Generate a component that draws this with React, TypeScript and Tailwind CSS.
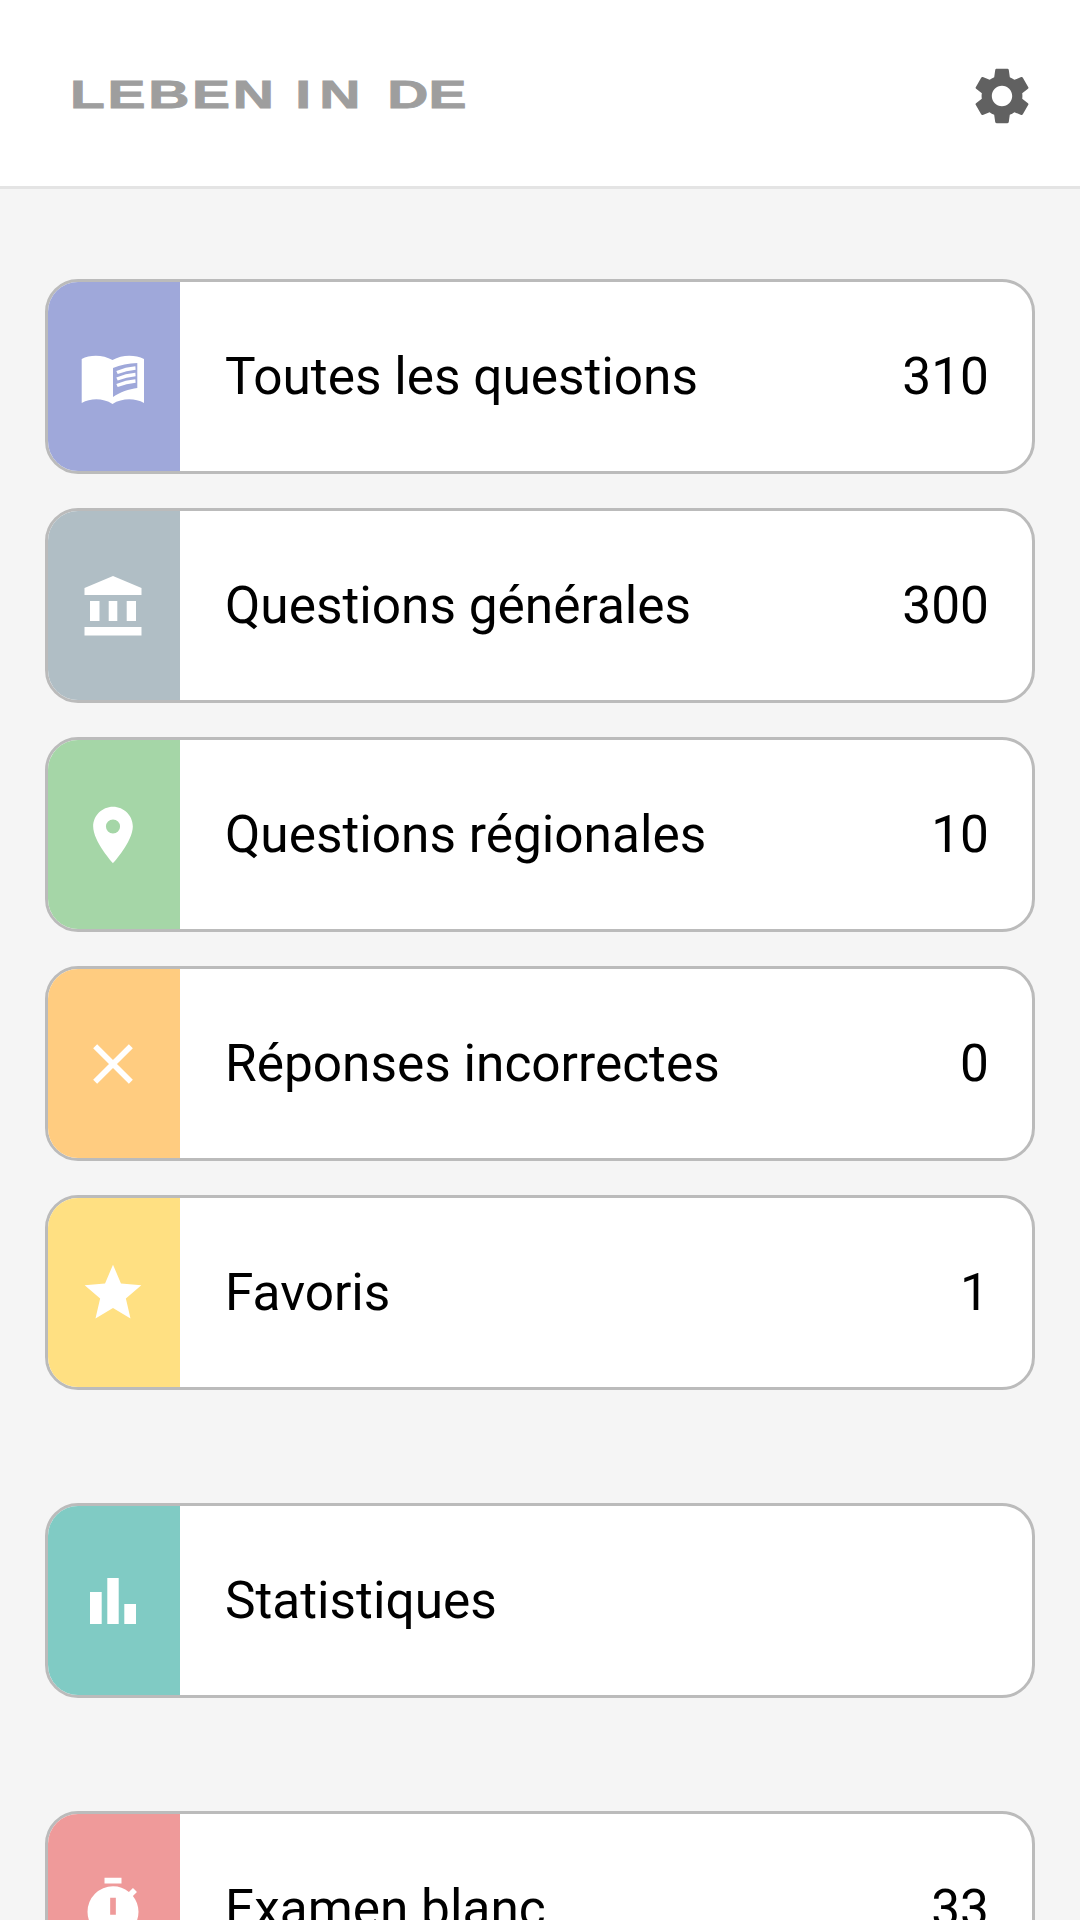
import type { ReactNode } from 'react';

function Gear() {
  return (
    <svg width="68" height="68" viewBox="0 0 24 24" fill="#616161">
      <path d="M19.14 12.94c.04-.3.06-.61.06-.94 0-.32-.02-.64-.07-.94l2.03-1.58a.49.49 0 0 0 .12-.61l-1.92-3.32a.488.488 0 0 0-.59-.22l-2.39.96c-.5-.38-1.03-.7-1.62-.94l-.36-2.54a.484.484 0 0 0-.48-.41h-3.84c-.24 0-.43.17-.47.41l-.36 2.54c-.59.24-1.13.57-1.62.94l-2.39-.96c-.22-.08-.47 0-.59.22L2.74 8.87c-.12.21-.08.47.12.61l2.03 1.58c-.05.3-.09.63-.09.94s.02.64.07.94l-2.03 1.58a.49.49 0 0 0-.12.61l1.92 3.32c.12.22.37.29.59.22l2.39-.96c.5.38 1.03.7 1.62.94l.36 2.54c.05.24.24.41.48.41h3.84c.24 0 .44-.17.47-.41l.36-2.54c.59-.24 1.13-.56 1.62-.94l2.39.96c.22.08.47 0 .59-.22l1.92-3.32c.12-.22.07-.47-.12-.61l-2.01-1.58zM12 15.6c-1.98 0-3.6-1.62-3.6-3.6s1.62-3.6 3.6-3.6 3.6 1.62 3.6 3.6-1.62 3.6-3.6 3.6z" />
    </svg>
  );
}

function BookIcon() {
  return (
    <svg width="80" height="65" viewBox="0 0 80 65" className="ml-[4px] mt-[2px]">
      {/* both pages as one shape, the right page's inner area cut out */}
      <path
        fill="#fff"
        fillRule="evenodd"
        d="M6.7 14C15 9.5 28 9.5 37.5 15 47 9.5 60 9.5 69 14v44c-9-5-22-5-31.5 1C28 53 16 53 6.7 58zM38 23v29c7-5 16-8 24.3-9V18c-9 .5-17 2-24.3 5z"
      />
      <g stroke="#fff" strokeWidth="3.5" fill="none">
        <path d="M42 27.5c6-2.5 12-4 18.5-4.5" />
        <path d="M42 34c6-2.500 12-4 18.5-4.5" />
        <path d="M42 40.5c6-2.500 12-4 18.5-4.5" />
      </g>
    </svg>
  );
}

function BankIcon() {
  return (
    <svg width="58" height="60" viewBox="0 0 58 60" fill="#fff">
      <path d="M29 0 57.5 12v7H.5v-7z" />
      <path d="M6 25h9.5v20H6zM24.7 25h8.6v20h-8.6zM42.7 25H52v20h-9.3zM.5 51h57v8.5H.5z" />
    </svg>
  );
}

function PinIcon() {
  return (
    <svg width="68" height="68" viewBox="0 0 24 24" fill="#fff">
      <path d="M12 2C8.13 2 5 5.13 5 9c0 5.25 7 13 7 13s7-7.75 7-13c0-3.87-3.13-7-7-7zm0 9.5a2.5 2.5 0 0 1 0-5 2.5 2.5 0 0 1 0 5z" />
    </svg>
  );
}

function CloseIcon() {
  return (
    <svg width="68" height="68" viewBox="0 0 24 24" fill="#fff">
      <path d="M19 6.41 17.59 5 12 10.59 6.41 5 5 6.41 10.59 12 5 17.59 6.41 19 12 13.41 17.59 19 19 17.59 13.41 12z" />
    </svg>
  );
}

function StarIcon() {
  return (
    <svg width="68" height="68" viewBox="0 0 24 24" fill="#fff">
      <path d="M12 17.27 18.18 21l-1.64-7.03L22 9.24l-7.19-.61L12 2 9.19 8.63 2 9.24l5.46 4.73L5.82 21z" />
    </svg>
  );
}

function BarsIcon() {
  return (
    <svg width="46" height="46" viewBox="0 0 46 46" fill="#fff">
      <path d="M0 14h11.7v32H0zM17.3 0h11.4v46H17.3zM34.3 26H46v20H34.3z" />
    </svg>
  );
}

function TimerIcon() {
  return (
    <svg width="68" height="68" viewBox="0 0 24 24" fill="#fff">
      <path
        fillRule="evenodd"
        d="M9 1h6v2H9zM19.03 7.39l1.42-1.42c-.43-.51-.9-.99-1.41-1.41l-1.42 1.42A8.96 8.96 0 0 0 12 4a9 9 0 1 0 9 9c0-2.12-.74-4.07-1.97-5.61zM13 14h-2V8h2v6z"
      />
    </svg>
  );
}

function MenuCard({
  icon,
  panel,
  label,
  count,
}: {
  icon: ReactNode;
  panel: string;
  label: string;
  count?: number;
}) {
  return (
    <div className="flex h-[195px] shrink-0 overflow-hidden rounded-[33px] border-[3px] border-[#bbbbbb] bg-white">
      <div className={`flex w-[132px] shrink-0 items-center justify-center pr-[2px] ${panel}`}>
        {icon}
      </div>
      <div className="flex flex-1 items-center justify-between pl-[45px] pr-[43px] text-[51.4px] text-black">
        <span>{label}</span>
        {count !== undefined && <span>{count}</span>}
      </div>
    </div>
  );
}

export default function App() {
  return (
    <div className="flex h-[1920px] w-[1080px] flex-col overflow-hidden bg-[#f5f5f5] font-['Roboto',sans-serif]">
      <header className="flex h-[189px] shrink-0 items-center justify-between border-b-[3px] border-[#e4e4e4] bg-white pl-[70px] pr-[44px] pt-[5px]">
        <div className="origin-left scale-x-[1.5] whitespace-nowrap font-['Liberation_Sans',sans-serif] text-[38px] font-bold tracking-[1.8px] text-[#9e9e9e] [-webkit-text-stroke:0.8px_#9e9e9e]">
          LEBEN <span className="tracking-[5.5px]">IN</span> <span className="tracking-[0px]">DE</span>
        </div>
        <Gear />
      </header>

      <main className="flex flex-col px-[45px] pt-[90px]">
        <div className="flex flex-col gap-[34px]">
          <MenuCard icon={<BookIcon />} panel="bg-[#9fa8da]" label="Toutes les questions" count={310} />
          <MenuCard icon={<BankIcon />} panel="bg-[#b0bec5]" label="Questions générales" count={300} />
          <MenuCard icon={<PinIcon />} panel="bg-[#a5d6a7]" label="Questions régionales" count={10} />
          <MenuCard icon={<CloseIcon />} panel="bg-[#ffcc80]" label="Réponses incorrectes" count={0} />
          <MenuCard icon={<StarIcon />} panel="bg-[#ffe082]" label="Favoris" count={1} />
        </div>
        <div className="mt-[113px]">
          <MenuCard icon={<BarsIcon />} panel="bg-[#80cbc4]" label="Statistiques" />
        </div>
        <div className="mt-[113px]">
          <MenuCard icon={<TimerIcon />} panel="bg-[#ef9a9a]" label="Examen blanc" count={33} />
        </div>
      </main>
    </div>
  );
}
